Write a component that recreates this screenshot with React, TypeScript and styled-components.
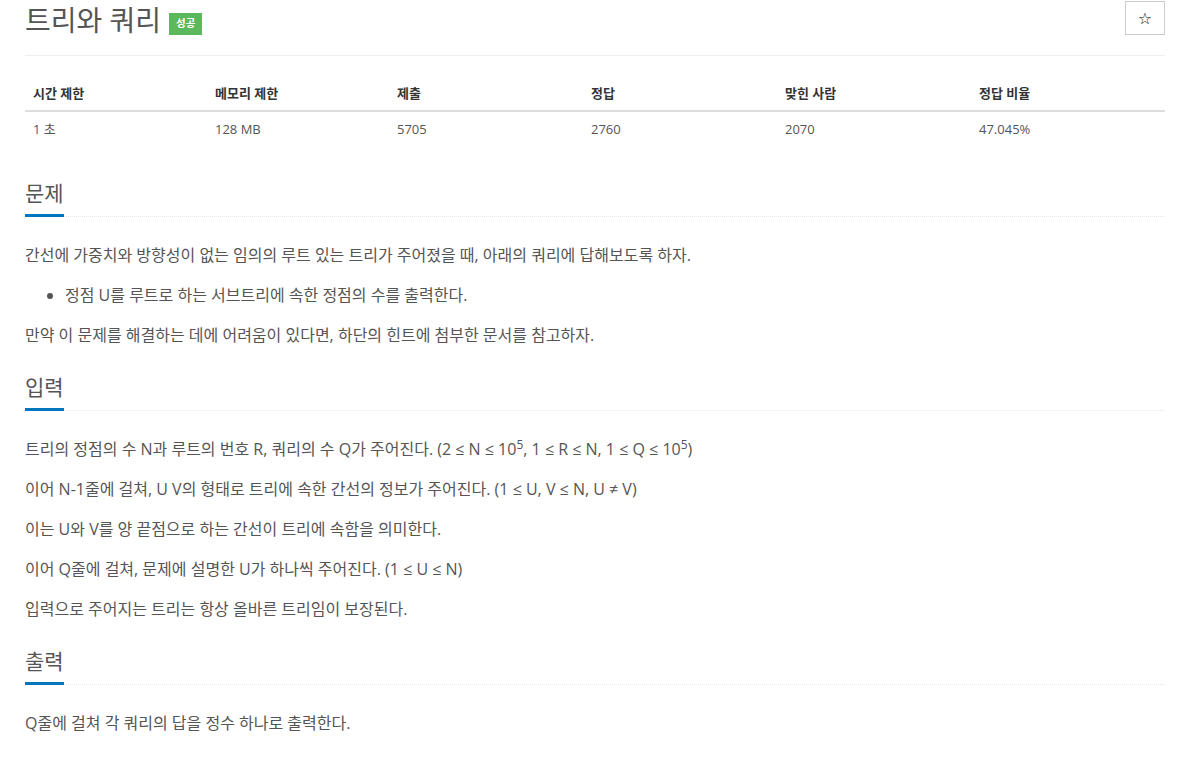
import React from "react";
import styled, { createGlobalStyle } from "styled-components";

const Global = createGlobalStyle`
  html, body { margin: 0; padding: 0; background: #fff; }
  body {
    font-family: "Open Sans", "Noto Sans CJK KR", sans-serif;
    color: #333;
    font-size: 14px;
  }
  * { box-sizing: border-box; }
`;

const Page = styled.div`
  width: 1140px;
  margin: 0 25px;
`;

const Header = styled.div`
  display: flex;
  align-items: flex-start;
  justify-content: space-between;
  border-bottom: 1px solid #eee;
  height: 56px;
  margin-bottom: 20px;
`;

const Title = styled.h1`
  margin: 0;
  padding-top: 2px;
  font-size: 28px;
  font-weight: 400;
  color: #555;
  line-height: 36px;
  display: flex;
  align-items: center;
  gap: 8px;
`;

const Badge = styled.span`
  display: inline-block;
  background: #5cb85c;
  color: #fff;
  font-size: 10.5px;
  font-weight: 700;
  padding: 3px 7px 4px;
  line-height: 15px;
  margin-top: 7px;
`;

const StarButton = styled.button`
  width: 40px;
  height: 34px;
  margin-top: 1px;
  border: 1px solid #ccc;
  background: #fff;
  color: #111;
  font-family: "DejaVu Sans", sans-serif;
  font-size: 16px;
  padding: 0;
  display: flex;
  align-items: center;
  justify-content: center;
`;

const Table = styled.table`
  width: 100%;
  border-collapse: collapse;
  table-layout: fixed;
  margin-bottom: 32px;
`;

const Th = styled.th<{ $w: number }>`
  width: ${(p) => p.$w}px;
  text-align: left;
  font-weight: 700;
  font-size: 13px;
  color: #333;
  padding: 8px;
  line-height: 18px;
  border-bottom: 2px solid #ddd;
`;

const Td = styled.td`
  font-size: 13px;
  color: #555;
  padding: 8px;
  line-height: 18px;
`;

const Section = styled.section`
  margin-bottom: 24px;
`;

const Headline = styled.div`
  border-bottom: 1px dotted #e4e9f0;
  margin-bottom: 26px;
`;

const H2 = styled.h2`
  display: inline-block;
  margin: 0 0 -1px;
  padding: 0 0 6px;
  font-size: 21px;
  font-weight: 400;
  color: #555;
  line-height: 30px;
  border-bottom: 3px solid #0076c0;
`;

const P = styled.p`
  margin: 0 0 15px;
  font-size: 16px;
  line-height: 25px;
  color: #555;
`;

const Sup = styled.sup`
  font-size: 75%;
  line-height: 0;
  position: relative;
  vertical-align: baseline;
  top: -0.5em;
`;

const List = styled.ul`
  margin: 0 0 15px;
  padding-left: 40px;
  font-size: 16px;
  line-height: 25px;
  color: #555;
`;

const Purple = styled.span`
  color: #6b3f7b;
`;

const cols: [string, number][] = [
  ["시간 제한", 182],
  ["메모리 제한", 182],
  ["제출", 194],
  ["정답", 194],
  ["맞힌 사람", 194],
  ["정답 비율", 194],
];

export default function App() {
  return (
    <>
      <Global />
      <Page>
        <Header>
          <Title>
            트리와 쿼리 <Badge>성공</Badge>
          </Title>
          <StarButton>☆</StarButton>
        </Header>
        <Table>
          <thead>
            <tr>
              {cols.map(([c, w]) => (
                <Th key={c} $w={w}>
                  {c}
                </Th>
              ))}
            </tr>
          </thead>
          <tbody>
            <tr>
              <Td>
                <Purple>1</Purple> 초
              </Td>
              <Td>128 MB</Td>
              <Td>5705</Td>
              <Td>2760</Td>
              <Td>2070</Td>
              <Td>47.045%</Td>
            </tr>
          </tbody>
        </Table>

        <Section>
          <Headline>
            <H2>문제</H2>
          </Headline>
          <P>간선에 가중치와 방향성이 없는 임의의 루트 있는 트리가 주어졌을 때, 아래의 쿼리에 답해보도록 하자.</P>
          <List>
            <li>정점 U를 루트로 하는 서브트리에 속한 정점의 수를 출력한다.</li>
          </List>
          <P>만약 이 문제를 해결하는 데에 어려움이 있다면, 하단의 힌트에 첨부한 문서를 참고하자.</P>
        </Section>

        <Section>
          <Headline>
            <H2>입력</H2>
          </Headline>
          <P>
            트리의 정점의 수 N과 루트의 번호 R, 쿼리의 수 Q가 주어진다. (2 ≤ N ≤ 10<Sup>5</Sup>, 1 ≤ R ≤ N, 1 ≤ Q ≤ 10<Sup>5</Sup>)
          </P>
          <P>이어 N-1줄에 걸쳐, U V의 형태로 트리에 속한 간선의 정보가 주어진다. (1 ≤ U, V ≤ N, U ≠ V)</P>
          <P>이는 U와 V를 양 끝점으로 하는 간선이 트리에 속함을 의미한다.</P>
          <P>이어 Q줄에 걸쳐, 문제에 설명한 U가 하나씩 주어진다. (1 ≤ U ≤ N)</P>
          <P>입력으로 주어지는 트리는 항상 올바른 트리임이 보장된다.</P>
        </Section>

        <Section>
          <Headline>
            <H2>출력</H2>
          </Headline>
          <P>Q줄에 걸쳐 각 쿼리의 답을 정수 하나로 출력한다.</P>
        </Section>
      </Page>
    </>
  );
}
